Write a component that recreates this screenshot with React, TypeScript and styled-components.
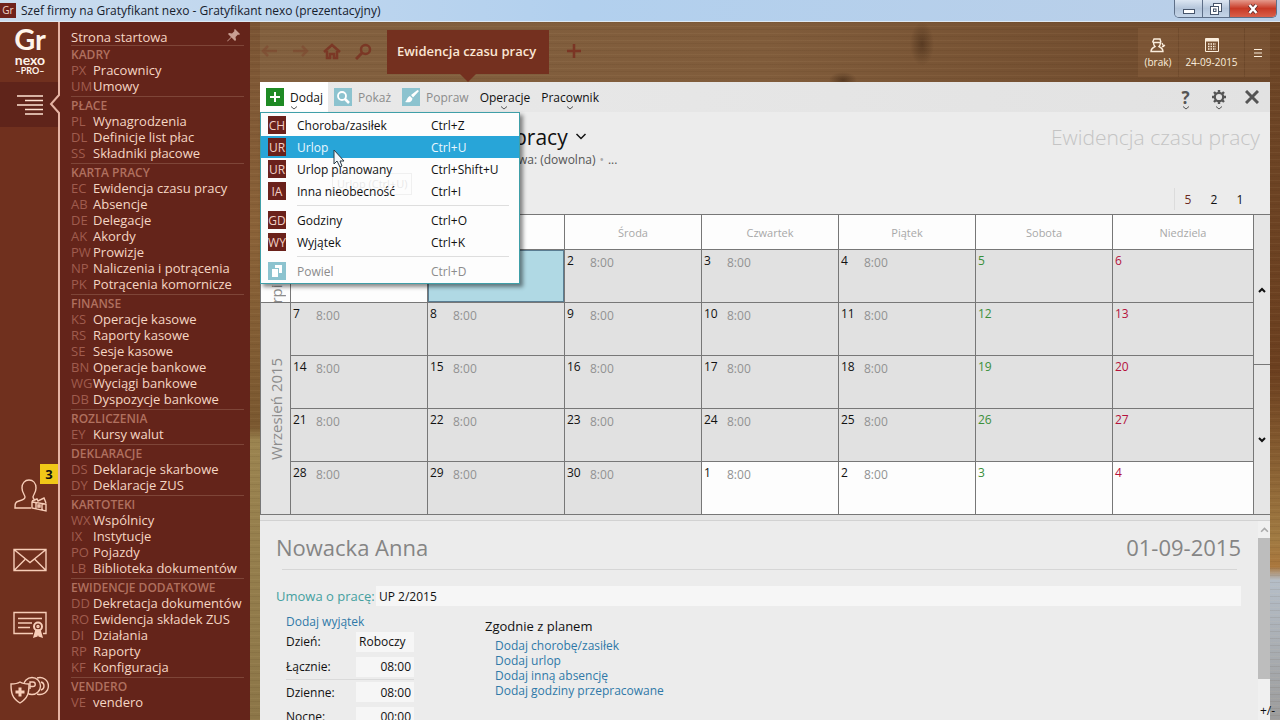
import React from 'react';
import styled, { createGlobalStyle, css } from 'styled-components';

const color = {
  rail: '#70301e',
  railActive: '#5f241a',
  menu: '#64241a',
  cream: '#f5d6c4',
  edge: '#e5b3a3',
  accent: '#28a5d8',
  teal: '#3f9fa8',
  pale: '#8cc3cf',
  link: '#2f79a8',
  grid: '#777777',
  panel: '#ececec',
};

const GlobalStyle = createGlobalStyle`
  * { box-sizing: border-box; }
  body { margin: 0; font-family: 'Open Sans', 'Noto Sans', sans-serif; font-size: 12px; color: #111; }
  button { font: inherit; color: inherit; border: 0; padding: 0; background: none; cursor: default; }
  h1, h2, h3, p, ul { margin: 0; padding: 0; font-weight: 400; }
  ul { list-style: none; }
  a { text-decoration: none; color: inherit; }
`;

const Window = styled.div`
  display: flex;
  flex-direction: column;
  height: 100vh;
  overflow: hidden;
`;

/* ---------- title bar ---------- */

const TitleBar = styled.header`
  display: flex;
  flex: none;
  justify-content: space-between;
  height: 22px;
  padding-right: 3px;
  background: linear-gradient(90deg, #cbdcee, #b2d0ee 45%, #bacfe8);
  border-bottom: 1px solid #dfe9f2;
`;

const AppTitle = styled.div`
  display: flex;
  align-items: center;
  gap: 5px;
  color: #16202c;
`;

const AppBadge = styled.span`
  width: 16px;
  height: 15px;
  background: #6f221b;
  color: #f2d3c8;
  font-size: 10px;
  line-height: 15px;
  text-align: center;
`;

const WindowButtons = styled.div`
  display: flex;
  height: 18px;
  border: 1px solid #5e6f88;
  border-top: 0;
  border-radius: 0 0 5px 5px;
  overflow: hidden;
`;

const WindowButton = styled.button<{ $close?: boolean }>`
  display: flex;
  align-items: center;
  justify-content: center;
  width: ${p => (p.$close ? 47 : 27)}px;
  background: ${p => (p.$close
    ? 'linear-gradient(#e59a8c, #c83a26 50%, #d9604a)'
    : 'linear-gradient(#dce6f2, #b4c5da 50%, #c5d5e8)')};
  & + & { border-left: 1px solid #5e6f88; }
`;

/* ---------- left rail and module menu ---------- */

const Body = styled.div`
  display: flex;
  flex: 1;
  min-height: 0;
`;

const Rail = styled.nav`
  position: relative;
  display: flex;
  flex-direction: column;
  flex: none;
  width: 60px;
  background: ${color.rail};
  border-right: 2px solid ${color.edge};
  color: ${color.cream};
`;

const Brand = styled.div`
  display: flex;
  flex-direction: column;
  align-items: center;
  height: 60px;
  padding: 2px 0 0 2px;
  color: #fff4ea;
  font-family: Lato, sans-serif;
  font-weight: 700;
`;

const BrandMark = styled.span`
  font-size: 29px;
  line-height: 30px;
`;

const BrandName = styled.span`
  font-size: 14px;
  line-height: 12px;
`;

const BrandEdition = styled.span`
  font-size: 9px;
  line-height: 10px;
`;

const RailToggle = styled.button`
  display: flex;
  align-items: center;
  justify-content: flex-end;
  height: 45px;
  padding-right: 15px;
  background: ${color.railActive};
`;

const RailNotch = styled.svg`
  position: absolute;
  left: 49px;
  top: 72px;
`;

const RailShortcuts = styled.div`
  display: flex;
  flex-direction: column;
  gap: 20px;
  margin-top: auto;
  padding-bottom: 8px;
`;

const RailButton = styled.button`
  position: relative;
  display: flex;
  align-items: center;
  justify-content: center;
  height: 45px;
  padding-left: 2px;
`;

const Counter = styled.span`
  position: absolute;
  right: 0;
  top: -8px;
  width: 18px;
  height: 20px;
  background: #f0c818;
  color: #111;
  font-size: 13px;
  font-weight: 700;
  line-height: 20px;
  text-align: center;
`;

const ModuleMenu = styled.nav`
  flex: none;
  width: 190px;
  padding: 7px 6px 0 11px;
  background: ${color.menu};
  color: ${color.cream};
  font-size: 13px;
  line-height: 16px;
`;

const MenuTop = styled.div`
  display: flex;
  justify-content: space-between;
`;

const ModuleGroup = styled.section`
  padding-bottom: 2px;
  border-top: 1px solid #7e4538;
`;

const GroupTitle = styled.h3`
  height: 16px;
  color: #b0705f;
  font-size: 12px;
  font-weight: 600;
  line-height: 18px;
`;

const ModuleLink = styled.a`
  display: flex;
  white-space: nowrap;
`;

const ModuleCode = styled.span`
  flex: none;
  width: 22px;
  color: #a05c4e;
`;

/* ---------- desktop ---------- */

const Desktop = styled.div`
  display: flex;
  flex-direction: column;
  flex: 1;
  min-width: 0;
  padding: 0 10px;
  background:
    repeating-linear-gradient(180deg, rgba(60, 35, 10, 0.08) 0 1px, transparent 1px 4px, rgba(255, 220, 170, 0.05) 4px 5px, transparent 5px 7px),
    linear-gradient(180deg, #7a5434, #8a6238 30%, #7a5830 58%, #9b8450 60%, #8c7648) left / 10px 100% no-repeat,
    linear-gradient(180deg, #6d4627, #6b3f1f 50%, #a07a42 74%, #a9763c 78%, #b5bec8 80%, #9c9c9c) right / 10px 100% no-repeat,
    radial-gradient(ellipse 12px 22px at 672px 22px, rgba(50, 28, 12, 0.45), transparent),
    radial-gradient(ellipse 14px 8px at 593px 58px, rgba(50, 28, 12, 0.5), transparent),
    linear-gradient(90deg, #82603f, #805c3b 50%, #6c472a);
`;

const DesktopBar = styled.div`
  display: flex;
  flex: none;
  height: 60px;
  color: #7a2f20;
`;

const NavButtons = styled.div`
  display: flex;
  align-items: center;
  gap: 14px;
  width: 127px;
  height: 58px;
  padding-left: 1px;
`;

const NavButton = styled.button<{ $dim?: boolean }>`
  display: flex;
  opacity: ${p => (p.$dim ? 0.3 : 0.8)};
`;

const ActiveTab = styled.button`
  position: relative;
  height: 44px;
  margin-top: 8px;
  padding: 0 13px 2px 10px;
  background: #74301f;
  color: #fbe6d4;
  font-size: 13px;
  font-weight: 600;
  white-space: nowrap;
  &::after {
    content: '';
    position: absolute;
    left: 50%;
    top: 44px;
    margin-left: -8px;
    border: 8px solid transparent;
    border-top-color: #74301f;
    border-bottom: 0;
  }
`;

const AddTab = styled.button`
  display: flex;
  align-items: center;
  height: 58px;
  margin-left: 18px;
  opacity: 0.85;
`;

const StatusTiles = styled.div`
  display: flex;
  gap: 1px;
  height: 49px;
  margin: 6px 0 0 auto;
`;

const StatusTile = styled.button<{ $width: number }>`
  display: flex;
  flex-direction: column;
  align-items: center;
  justify-content: center;
  gap: 2px;
  width: ${p => p.$width}px;
  background: rgba(150, 105, 70, 0.3);
  color: #fbeedd;
  font-size: 10px;
  line-height: 14px;
`;

const Panel = styled.main`
  display: flex;
  flex-direction: column;
  flex: 1;
  min-height: 0;
  background: ${color.panel};
`;

const Toolbar = styled.div`
  position: relative;
  display: flex;
  flex: none;
  height: 30px;
  background: linear-gradient(90deg, #e9e9e9, #e2e2e2);
`;

const ToolButton = styled.button<{ $open?: boolean; $disabled?: boolean }>`
  position: relative;
  display: flex;
  align-items: center;
  gap: 6px;
  padding: 0 5px 0 6px;
  background: ${p => (p.$open ? '#fff' : 'transparent')};
  color: ${p => (p.$disabled ? '#8c8c8c' : '#111')};
`;

const ToolIcon = styled.span<{ $bg: string }>`
  display: flex;
  align-items: center;
  justify-content: center;
  width: 18px;
  height: 18px;
  background: ${p => p.$bg};
`;

const Caret = styled.svg`
  position: absolute;
  left: 50%;
  bottom: 2px;
  margin-left: -4px;
`;

const ToolbarRight = styled.div`
  display: flex;
  align-items: center;
  gap: 16px;
  margin-left: auto;
  padding-right: 10px;
  color: #555;
`;

const IconButton = styled.button`
  position: relative;
  display: flex;
  align-items: center;
  justify-content: center;
  width: 17px;
  height: 30px;
  font-size: 17px;
  font-weight: 700;
`;

/* ---------- drop-down ---------- */

const DropDown = styled.div`
  position: absolute;
  left: 0;
  top: 30px;
  z-index: 2;
  width: 260px;
  padding: 1px 0;
  background: #fdfdfd;
  border: 1px solid ${color.teal};
  box-shadow: 3px 3px 4px rgba(0, 0, 0, 0.45);
`;

const DropItem = styled.button<{ $active?: boolean; $disabled?: boolean }>`
  display: flex;
  align-items: center;
  width: 100%;
  height: 22px;
  padding-left: 7px;
  text-align: left;
  background: ${p => (p.$active ? color.accent : 'transparent')};
  color: ${p => (p.$active ? '#eaf7ff' : p.$disabled ? '#8c8c8c' : '#111')};
`;

const DropBadge = styled.span<{ $pale?: boolean }>`
  display: flex;
  align-items: center;
  justify-content: center;
  width: 18px;
  height: 18px;
  overflow: hidden;
  background: ${p => (p.$pale ? color.pale : '#6a211b')};
  color: #f1d0c6;
`;

const DropLabel = styled.span`
  width: 134px;
  margin-left: 11px;
`;

const DropDivider = styled.hr`
  height: 1px;
  margin: 3px 10px 3px 36px;
  border: 0;
  background: #dedede;
`;

const Pointer = styled.svg`
  position: absolute;
  left: 72px;
  top: 36px;
`;

const Hint = styled.span`
  position: absolute;
  left: 71px;
  top: 60px;
  padding: 0 4px;
  border: 1px solid #777;
  font-size: 11px;
  line-height: 20px;
  opacity: 0.09;
`;

/* ---------- heading ---------- */

const Heading = styled.div`
  display: flex;
  flex: none;
  justify-content: space-between;
  height: 102px;
  padding: 10px 10px 0 254px;
`;

const HeadingTitle = styled.h1`
  display: flex;
  align-items: center;
  gap: 7px;
  font-size: 21px;
  line-height: 30px;
  white-space: nowrap;
`;

const HeadingFilter = styled.p`
  display: flex;
  gap: 4px;
  padding-left: 4px;
  color: #555;
  line-height: 16px;
  white-space: nowrap;
`;

const Dot = styled.span`
  color: #aaa;
`;

const HeadingAside = styled.div`
  display: flex;
  flex-direction: column;
  align-items: flex-end;
  justify-content: space-between;
`;

const Watermark = styled.h2`
  color: #c4c4c4;
  font-size: 21px;
  font-weight: 300;
  line-height: 30px;
  white-space: nowrap;
`;

const WeekSwitch = styled.div`
  display: flex;
  margin: 0 7px 4px 0;
  border-left: 1px solid #dcdcdc;
`;

const WeekButton = styled.button<{ $current?: boolean }>`
  width: 26px;
  height: 22px;
  color: ${p => (p.$current ? '#6a2b22' : '#111')};
`;

/* ---------- calendar ---------- */

const CalendarRow = styled.div`
  display: flex;
  flex: none;
`;

const CalendarArea = styled.div`
  flex: 1;
  min-width: 0;
`;

const Calendar = styled.table`
  width: 100%;
  table-layout: fixed;
  border-collapse: separate;
  border-spacing: 0;
  border: solid ${color.grid};
  border-width: 1px 0 0 1px;
  th, td { padding: 0; border: solid ${color.grid}; border-width: 0 1px 1px 0; }
`;

const MonthCol = styled.col`
  width: 30px;
`;

const SundayCol = styled.col`
  width: 141px;
`;

const DayHead = styled.th`
  height: 35px;
  background: #fdfdfd;
  color: #a8a8a8;
  font-size: 11px;
  font-weight: 400;
`;

const MonthCell = styled.th<{ $out?: boolean }>`
  background: ${p => (p.$out ? '#fdfdfd' : '#e4e4e4')};
  color: #8c8c8c;
  font-size: 15px;
  font-weight: 400;
`;

const MonthName = styled.div<{ $rows: number }>`
  display: flex;
  align-items: center;
  justify-content: center;
  width: 29px;
  height: ${p => p.$rows * 53 - 1}px;
  overflow: hidden;
  writing-mode: vertical-rl;
  transform: rotate(180deg);
  white-space: nowrap;
`;

const DayCell = styled.td<{ $out?: boolean; $selected?: boolean }>`
  height: 53px;
  vertical-align: top;
  background: ${p => (p.$selected ? '#b0d9e4' : p.$out ? '#fdfdfd' : '#e1e1e1')};
  ${p => p.$selected && css`box-shadow: inset 0 0 0 1px #5a7d92;`}
`;

const DayContent = styled.div`
  display: flex;
  padding: 3px 2px;
  line-height: 16px;
`;

const DayNumber = styled.span<{ $tone: string }>`
  width: 23px;
  color: ${p => p.$tone};
`;

const DayHours = styled.span`
  padding-top: 2px;
  color: #929292;
`;

const WeekScroll = styled.div`
  display: flex;
  flex-direction: column;
  flex: none;
  width: 16px;
  border-top: 1px solid ${color.grid};
  border-bottom: 1px solid ${color.grid};
  background: #e6e6e6;
`;

const WeekScrollButton = styled.button`
  display: flex;
  align-items: center;
  justify-content: center;
  flex: 1;
  & + & { border-top: 1px solid ${color.grid}; }
`;

/* ---------- details ---------- */

const Splitter = styled.div`
  flex: none;
  height: 6px;
  background: #e6e6e6;
  border-bottom: 1px solid #d2d2d2;
`;

const Details = styled.section`
  display: flex;
  flex: 1;
  min-height: 0;
`;

const DetailsBody = styled.div`
  flex: 1;
  padding: 11px 17px 0 16px;
  overflow: hidden;
`;

const DetailsHead = styled.div`
  display: flex;
  justify-content: space-between;
  color: #858585;
  font-size: 22px;
  line-height: 30px;
`;

const Rule = styled.hr`
  height: 1px;
  margin: 7px 4px 15px 6px;
  border: 0;
  background: #d6d6d6;
`;

const ContractRow = styled.div`
  display: flex;
  align-items: center;
  height: 22px;
`;

const ContractLabel = styled.label`
  width: 100px;
  color: #45a0a0;
  font-size: 13px;
  white-space: nowrap;
`;

const Field = styled.input<{ $width?: number; $right?: boolean }>`
  ${p => (p.$width ? css`width: ${p.$width}px;` : css`flex: 1;`)}
  min-width: 0;
  height: 20px;
  padding: 0 3px;
  border: 0;
  background: #f6f6f6;
  color: #111;
  font: inherit;
  text-align: ${p => (p.$right ? 'right' : 'left')};
`;

const DetailsColumns = styled.div`
  display: flex;
  padding: 7px 0 0 10px;
`;

const HoursForm = styled.div`
  width: 199px;
`;

const ActionLink = styled.a`
  display: block;
  color: ${color.link};
  line-height: 15px;
`;

const HoursRow = styled.div<{ $line?: boolean }>`
  display: flex;
  align-items: center;
  justify-content: space-between;
  width: 128px;
  height: 25px;
  ${p => p.$line && css`border-top: 1px solid #dadada;`}
`;

const Plan = styled.div`
  padding-top: 3px;
  h3 { font-size: 13px; line-height: 18px; }
`;

const PlanLinks = styled.ul`
  padding: 3px 0 0 10px;
`;

const ScrollTrack = styled.div`
  display: flex;
  flex-direction: column;
  align-items: center;
  position: relative;
  width: 12px;
  padding-top: 4px;
  background: #f0f0f0;
`;

const ScrollThumb = styled.div`
  width: 12px;
  height: 141px;
  margin-top: 4px;
  background: #bdbdbd;
`;

const ZoomMark = styled.span`
  position: absolute;
  left: 2px;
  bottom: 0;
  font-size: 12px;
  line-height: 18px;
  white-space: nowrap;
`;

/* ---------- data ---------- */

const modules: [string, [string, string][]][] = [
  ['KADRY', [['PX', 'Pracownicy'], ['UM', 'Umowy']]],
  ['PŁACE', [['PL', 'Wynagrodzenia'], ['DL', 'Definicje list płac'], ['SS', 'Składniki płacowe']]],
  ['KARTA PRACY', [['EC', 'Ewidencja czasu pracy'], ['AB', 'Absencje'], ['DE', 'Delegacje'], ['AK', 'Akordy'], ['PW', 'Prowizje'], ['NP', 'Naliczenia i potrącenia'], ['PK', 'Potrącenia komornicze']]],
  ['FINANSE', [['KS', 'Operacje kasowe'], ['RS', 'Raporty kasowe'], ['SE', 'Sesje kasowe'], ['BN', 'Operacje bankowe'], ['WG', 'Wyciągi bankowe'], ['DB', 'Dyspozycje bankowe']]],
  ['ROZLICZENIA', [['EY', 'Kursy walut']]],
  ['DEKLARACJE', [['DS', 'Deklaracje skarbowe'], ['DY', 'Deklaracje ZUS']]],
  ['KARTOTEKI', [['WX', 'Wspólnicy'], ['IX', 'Instytucje'], ['PO', 'Pojazdy'], ['LB', 'Biblioteka dokumentów']]],
  ['EWIDENCJE DODATKOWE', [['DD', 'Dekretacja dokumentów'], ['RO', 'Ewidencja składek ZUS'], ['DI', 'Działania'], ['RP', 'Raporty'], ['KF', 'Konfiguracja']]],
  ['VENDERO', [['VE', 'vendero']]],
];

type Action = { code: string; label: string; keys: string; active?: boolean; disabled?: boolean };

const actions: (Action | null)[] = [
  { code: 'CH', label: 'Choroba/zasiłek', keys: 'Ctrl+Z' },
  { code: 'UR', label: 'Urlop', keys: 'Ctrl+U', active: true },
  { code: 'UR', label: 'Urlop planowany', keys: 'Ctrl+Shift+U' },
  { code: 'IA', label: 'Inna nieobecność', keys: 'Ctrl+I' },
  null,
  { code: 'GD', label: 'Godziny', keys: 'Ctrl+O' },
  { code: 'WY', label: 'Wyjątek', keys: 'Ctrl+K' },
  null,
  { code: '', label: 'Powiel', keys: 'Ctrl+D', disabled: true },
];

const weekdays = ['', '', 'Środa', 'Czwartek', 'Piątek', 'Sobota', 'Niedziela'];

/* null: a day whose number is covered by the open menu */
const weeks: (number | null)[][] = [
  [null, null, 2, 3, 4, 5, 6],
  [7, 8, 9, 10, 11, 12, 13],
  [14, 15, 16, 17, 18, 19, 20],
  [21, 22, 23, 24, 25, 26, 27],
  [28, 29, 30, 1, 2, 3, 4],
];

const dayTone = (column: number) => (column === 5 ? '#3a8f3a' : column === 6 ? '#b5123c' : '#111');

const hours: [string, string, boolean][] = [
  ['Łącznie:', '08:00', false],
  ['Dzienne:', '08:00', true],
  ['Nocne:', '00:00', false],
];

/* ---------- drawings ---------- */

const Chevron = ({ up = false, size = 8, width = 2, stroke = '#111' }) => (
  <svg width={size} height={size} viewBox="0 0 8 8" fill="none" stroke={stroke} strokeWidth={width}>
    <path d={up ? 'M1 6l3-3 3 3' : 'M1 2l3 3 3-3'} />
  </svg>
);

const SmallCaret = () => (
  <Caret width="8" height="4" viewBox="0 0 8 4" fill="none" stroke="#555">
    <path d="M1 .5l3 2.5L7 .5" />
  </Caret>
);

const lineIcon = { fill: 'none', stroke: '#f7cdb8', strokeWidth: 1.4 };

export default function App() {
  return (
    <Window>
      <GlobalStyle />
      <TitleBar>
        <AppTitle>
          <AppBadge>Gr</AppBadge>
          Szef firmy na Gratyfikant nexo - Gratyfikant nexo (prezentacyjny)
        </AppTitle>
        <WindowButtons>
          <WindowButton aria-label="Minimalizuj">
            <svg width="14" height="14" viewBox="0 0 14 14"><rect x="1.5" y="7.5" width="11" height="4" fill="#fff" stroke="#46546a" /></svg>
          </WindowButton>
          <WindowButton aria-label="Przywróć">
            <svg width="14" height="14" viewBox="0 0 14 14" fill="#fff" stroke="#46546a">
              <rect x="4.5" y="1.5" width="8" height="8" /><rect x="1.5" y="4.5" width="8" height="8" /><rect x="4.5" y="7" width="2.5" height="2.5" />
            </svg>
          </WindowButton>
          <WindowButton $close aria-label="Zamknij">
            <svg width="12" height="12" viewBox="0 0 12 12" fill="none">
              <path d="M2.5 2l7 8M9.5 2l-7 8" stroke="#5c2a2a" strokeWidth="4" /><path d="M2.5 2l7 8M9.5 2l-7 8" stroke="#fff" strokeWidth="2.5" />
            </svg>
          </WindowButton>
        </WindowButtons>
      </TitleBar>

      <Body>
        <Rail>
          <Brand>
            <BrandMark>Gr</BrandMark>
            <BrandName>nexo</BrandName>
            <BrandEdition>–PRO–</BrandEdition>
          </Brand>
          <RailToggle aria-label="Menu modułów">
            <svg width="26" height="20" viewBox="0 0 26 20" stroke="#ffe2d2" strokeWidth="1.5">
              <path d="M0 1h26M8 5.500h18M0 10h26M8 14.500h18M8 19h18" />
            </svg>
          </RailToggle>
          <RailNotch width="11" height="20" viewBox="0 0 11 20">
            <path d="M11 0H9v1L1 10l8 9v1h2z" fill={color.menu} />
            <path d="M10 0v1L2 10l8 9v1" fill="none" stroke={color.edge} strokeWidth="2" />
          </RailNotch>
          <RailShortcuts>
            <RailButton aria-label="Kontrahenci">
              <svg width="36" height="36" viewBox="0 0 36 36" {...lineIcon}>
                <path d="M19 31H3c0-4 0-6 4-7 4-1 6-2 6-4s-3-4-3-9c0-5 3-8 7-8s7 3 7 8-3 7-3 9c0 1 .500 2 2 3" />
                <path d="M20 24l5-2 1 2 6-3 2 5M20 25l14 2v7l-14-3zM24 25v7M30 26v7M26 28h2v2h-2z" />
              </svg>
              <Counter>3</Counter>
            </RailButton>
            <RailButton aria-label="Poczta">
              <svg width="34" height="24" viewBox="0 0 34 24" {...lineIcon}>
                <path d="M1 1.500h32v21H1zM1 1.500l16 13 16-13M1 22.500l11-11M33 22.500l-11-11" />
              </svg>
            </RailButton>
            <RailButton aria-label="Certyfikaty">
              <svg width="34" height="28" viewBox="0 0 34 28" {...lineIcon}>
                <path d="M20 22.500H1v-21h32v21h-3M5 7.500h24M5 12h14M5 16.500h12" />
                <circle cx="25" cy="15.500" r="4" strokeWidth="2" /><circle cx="25" cy="15.500" r="1" />
                <path d="M23 19l-2 7 3-1 1-4 1 4 3 1-2-7z" fill="#f7cdb8" />
              </svg>
            </RailButton>
            <RailButton aria-label="Ubezpieczenia">
              <svg width="40" height="30" viewBox="0 0 40 30" {...lineIcon}>
                <circle cx="22" cy="11" r="8.5" />
                <path d="M27 3a8.500 8.500 0 1 1 0 16" />
                <path d="M20 14V7h3a2 2 0 0 1 0 4.500h-3M31 7c4 1 4 7 0 8" />
                <path d="M10 7c3 2 6 2 9 2 0 9-1 14-9 19C2 23 1 18 1 9c3 0 6 0 9-2z" fill={color.rail} />
                <path d="M10 12.500v9M5.500 17h9" strokeWidth="3" />
              </svg>
            </RailButton>
          </RailShortcuts>
        </Rail>

        <ModuleMenu>
          <MenuTop>
            <a href="#start">Strona startowa</a>
            <svg width="18" height="14" viewBox="0 0 18 14" fill="#c99f93">
              <path d="M9 0l5 5-1 1-1-.5L9.500 8l.5 3-1 1-3.500-3.500L2 12l-1 .5.500-1L5 8 2 5l1-1 3 .5L8.500 2 8 1z" />
            </svg>
          </MenuTop>
          {modules.map(([title, links]) => (
            <ModuleGroup key={title}>
              <GroupTitle>{title}</GroupTitle>
              {links.map(([code, label]) => (
                <ModuleLink key={code} href={`#${code}`}>
                  <ModuleCode>{code}</ModuleCode>
                  {label}
                </ModuleLink>
              ))}
            </ModuleGroup>
          ))}
        </ModuleMenu>

        <Desktop>
          <DesktopBar>
            <NavButtons>
              <NavButton $dim aria-label="Wstecz">
                <svg width="17" height="12" viewBox="0 0 17 12" fill="none" stroke="currentColor" strokeWidth="2.5"><path d="M16 6H3M7 1L2 6l5 5" /></svg>
              </NavButton>
              <NavButton $dim aria-label="Dalej">
                <svg width="17" height="12" viewBox="0 0 17 12" fill="none" stroke="currentColor" strokeWidth="2.5"><path d="M1 6h13M10 1l5 5-5 5" /></svg>
              </NavButton>
              <NavButton aria-label="Start">
                <svg width="18" height="17" viewBox="0 0 18 17" fill="none" stroke="currentColor" strokeWidth="2.5"><path d="M1 9l8-7 8 7M4 8v7h3v-4h4v4h3V8" /></svg>
              </NavButton>
              <NavButton aria-label="Szukaj">
                <svg width="17" height="17" viewBox="0 0 17 17" fill="none" stroke="currentColor" strokeWidth="2.5"><circle cx="10.5" cy="6.5" r="4.5" /><path d="M7 10l-6 6" strokeWidth="3" /></svg>
              </NavButton>
            </NavButtons>
            <ActiveTab>Ewidencja czasu pracy</ActiveTab>
            <AddTab aria-label="Nowa karta">
              <svg width="14" height="14" viewBox="0 0 14 14" stroke="currentColor" strokeWidth="2.5"><path d="M7 0v14M0 7h14" /></svg>
            </AddTab>
            <StatusTiles>
              <StatusTile $width={40}>
                <svg width="16" height="16" viewBox="0 0 16 16" fill="none" stroke="currentColor" strokeWidth="1.4">
                  <path d="M1 14.500c0-3 2-4 4-5-1-1-1.500-2-1.500-4h7c0 2-.5 3-1.500 4 2 1 4 2 4 5zM2.500 5.500L4 2h6l1 3.500M12 10l3-2M12 6l2 4" />
                </svg>
                (brak)
              </StatusTile>
              <StatusTile $width={65}>
                <svg width="14" height="16" viewBox="0 0 14 16" fill="none" stroke="currentColor">
                  <path d="M.5 1.500h13v13H.5z" /><path d="M1 3h12" strokeWidth="3" /><path d="M3 7h8M3 9.500h8M3 12h8" strokeWidth="1.5" strokeDasharray="1.5 1" />
                </svg>
                24-09-2015
              </StatusTile>
              <StatusTile $width={25} aria-label="Menu">
                <svg width="8" height="8" viewBox="0 0 8 8" stroke="currentColor"><path d="M0 .5h8M0 4h8M0 7.500h8" /></svg>
              </StatusTile>
            </StatusTiles>
          </DesktopBar>

          <Panel>
            <Toolbar>
              <ToolButton $open>
                <ToolIcon $bg="#1e8a24">
                  <svg width="12" height="12" viewBox="0 0 12 12" stroke="#fff" strokeWidth="2"><path d="M6 1v10M1 6h10" /></svg>
                </ToolIcon>
                Dodaj
                <SmallCaret />
              </ToolButton>
              <ToolButton $disabled>
                <ToolIcon $bg={color.pale}>
                  <svg width="14" height="14" viewBox="0 0 14 14" fill="none" stroke="#fff" strokeWidth="1.8"><circle cx="6" cy="6" r="4" /><path d="M9 9l4 4" strokeWidth="2.5" /></svg>
                </ToolIcon>
                Pokaż
              </ToolButton>
              <ToolButton $disabled>
                <ToolIcon $bg={color.pale}>
                  <svg width="16" height="16" viewBox="0 0 16 16" fill="#fff"><path d="M14.500 1L8 6l2 2.500L16 2zM7 7l2.500 2.500C9 13 6 14 2 13c2-1 2-5 5-6z" /></svg>
                </ToolIcon>
                Popraw
              </ToolButton>
              <ToolButton>Operacje<SmallCaret /></ToolButton>
              <ToolButton>Pracownik<SmallCaret /></ToolButton>
              <ToolbarRight>
                <IconButton aria-label="Pomoc">?<SmallCaret /></IconButton>
                <IconButton aria-label="Ustawienia">
                  <svg width="16" height="16" viewBox="0 0 16 16" fill="none" stroke="currentColor">
                    <circle cx="8" cy="8" r="4.2" strokeWidth="2.2" />
                    <path d="M8 1v2.500M8 12.500V15M1 8h2.500M12.500 8H15M3 3l1.800 1.800M11.200 11.200L13 13M13 3l-1.800 1.800M4.800 11.200L3 13" strokeWidth="2.4" />
                  </svg>
                  <SmallCaret />
                </IconButton>
                <IconButton aria-label="Zamknij kartę">
                  <svg width="14" height="14" viewBox="0 0 14 14" stroke="currentColor" strokeWidth="3"><path d="M1 1l12 12M13 1L1 13" /></svg>
                </IconButton>
              </ToolbarRight>

              <DropDown role="menu">
                {actions.map((item, index) => item === null ? <DropDivider key={index} /> : (
                  <DropItem key={index} role="menuitem" $active={item.active} $disabled={item.disabled}>
                    <DropBadge $pale={item.disabled}>
                      {item.code || (
                        <svg width="14" height="14" viewBox="0 0 14 14" fill="#fff"><path d="M5 1h7v8H9V4H5zM2 5h6v8H2z" /></svg>
                      )}
                    </DropBadge>
                    <DropLabel>{item.label}</DropLabel>
                    {item.keys}
                  </DropItem>
                ))}
                <Hint>Urlop (Ctrl+U)</Hint>
                <Pointer width="13" height="20" viewBox="0 0 13 20">
                  <path d="M1 1v14l3-3 3 6 2-1-2-5h4z" fill="#f4f8fb" stroke="#2b3a44" />
                </Pointer>
              </DropDown>
            </Toolbar>

            <Heading>
              <div>
                <HeadingTitle>
                  pracy
                  <Chevron size={12} width={1} />
                </HeadingTitle>
                <HeadingFilter>
                  <span>wa: (dowolna)</span>
                  <Dot>•</Dot>
                  <span>...</span>
                </HeadingFilter>
              </div>
              <HeadingAside>
                <Watermark>Ewidencja czasu pracy</Watermark>
                <WeekSwitch>
                  <WeekButton $current>5</WeekButton>
                  <WeekButton>2</WeekButton>
                  <WeekButton>1</WeekButton>
                </WeekSwitch>
              </HeadingAside>
            </Heading>

            <CalendarRow>
              <CalendarArea>
                <Calendar>
                  <colgroup>
                    <MonthCol />
                    {weekdays.slice(0, 6).map((day, column) => <col key={column} />)}
                    <SundayCol />
                  </colgroup>
                  <thead>
                    <tr>
                      <DayHead />
                      {weekdays.map((day, column) => <DayHead key={column} scope="col">{day}</DayHead>)}
                    </tr>
                  </thead>
                  <tbody>
                    {weeks.map((week, row) => (
                      <tr key={row}>
                        {row === 0 && <MonthCell $out><MonthName $rows={1}>Sierpień 2015</MonthName></MonthCell>}
                        {row === 1 && <MonthCell rowSpan={4}><MonthName $rows={4}>Wrzesień 2015</MonthName></MonthCell>}
                        {week.map((day, column) => (
                          <DayCell
                            key={column}
                            $out={(row === 0 && column === 0) || (row === 4 && column > 2)}
                            $selected={row === 0 && column === 1}
                          >
                            {day !== null && (
                              <DayContent>
                                <DayNumber $tone={dayTone(column)}>{day}</DayNumber>
                                {column < 5 && <DayHours>8:00</DayHours>}
                              </DayContent>
                            )}
                          </DayCell>
                        ))}
                      </tr>
                    ))}
                  </tbody>
                </Calendar>
              </CalendarArea>
              <WeekScroll>
                <WeekScrollButton aria-label="Wcześniej"><Chevron up /></WeekScrollButton>
                <WeekScrollButton aria-label="Później"><Chevron /></WeekScrollButton>
              </WeekScroll>
            </CalendarRow>

            <Splitter />

            <Details>
              <DetailsBody>
                <DetailsHead>
                  <span>Nowacka Anna</span>
                  <span>01-09-2015</span>
                </DetailsHead>
                <Rule />
                <ContractRow>
                  <ContractLabel htmlFor="contract">Umowa o pracę:</ContractLabel>
                  <Field id="contract" defaultValue="UP 2/2015" />
                </ContractRow>
                <DetailsColumns>
                  <HoursForm>
                    <ActionLink href="#exception">Dodaj wyjątek</ActionLink>
                    <HoursRow>
                      <label htmlFor="day-kind">Dzień:</label>
                      <Field id="day-kind" $width={58} defaultValue="Roboczy" />
                    </HoursRow>
                    {hours.map(([label, value, line]) => (
                      <HoursRow key={label} $line={line}>
                        <label htmlFor={label}>{label}</label>
                        <Field id={label} $width={58} $right defaultValue={value} />
                      </HoursRow>
                    ))}
                  </HoursForm>
                  <Plan>
                    <h3>Zgodnie z planem</h3>
                    <PlanLinks>
                      <li><ActionLink href="#sick">Dodaj chorobę/zasiłek</ActionLink></li>
                      <li><ActionLink href="#leave">Dodaj urlop</ActionLink></li>
                      <li><ActionLink href="#absence">Dodaj inną absencję</ActionLink></li>
                      <li><ActionLink href="#overtime">Dodaj godziny przepracowane</ActionLink></li>
                    </PlanLinks>
                  </Plan>
                </DetailsColumns>
              </DetailsBody>
              <ScrollTrack>
                <Chevron up size={9} width={1.4} stroke="#aaa" />
                <ScrollThumb />
                <ZoomMark>+/-</ZoomMark>
              </ScrollTrack>
            </Details>
          </Panel>
        </Desktop>
      </Body>
    </Window>
  );
}
